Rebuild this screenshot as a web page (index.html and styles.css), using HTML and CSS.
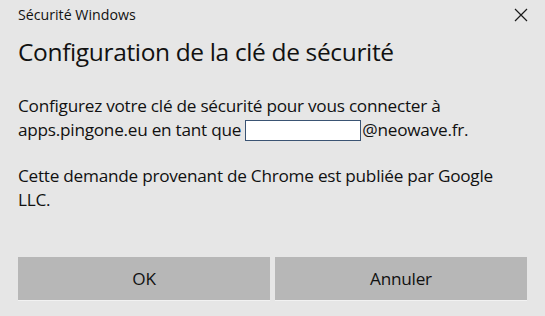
FILE: index.html
```html
<!DOCTYPE html>
<html lang="fr">
<head>
<meta charset="utf-8">
<title>Sécurité Windows</title>
<link rel="stylesheet" href="styles.css">
</head>
<body>
<div class="dialog">
  <div class="titlebar">
    <span class="app-name">Sécurité Windows</span>
    <button class="close" aria-label="Fermer">
      <svg width="14" height="14" viewBox="0 0 14 14"><path d="M1 1L13 13M13 1L1 13" stroke="#1a1a1a" stroke-width="1.2" fill="none"/></svg>
    </button>
  </div>
  <h1 class="heading">Configuration de la clé de sécurité</h1>
  <div class="content">
    <p class="para">Configurez votre clé de sécurité pour vous connecter à apps.pingone.eu en tant que <span class="redact"></span>@neowave.fr.</p>
    <p class="para">Cette demande provenant de Chrome est publiée par Google LLC.</p>
  </div>
  <div class="actions">
    <button class="btn">OK</button>
    <button class="btn">Annuler</button>
  </div>
</div>
</body>
</html>
```
FILE: styles.css
```css
html, body {
  margin: 0;
  padding: 0;
  background: #e6e6e6;
}
body {
  font-family: "Open Sans", "Noto Sans", sans-serif;
  color: #111;
}
.dialog {
  width: 545px;
  height: 316px;
  box-sizing: border-box;
  padding: 0 18px 0 18px;
  display: flex;
  flex-direction: column;
}
.titlebar {
  display: flex;
  align-items: center;
  justify-content: space-between;
  height: 30px;
}
.app-name {
  font-size: 14.2px;
  line-height: 16px;
  margin-top: -1px;
}
.close {
  border: none;
  background: transparent;
  padding: 0;
  width: 14px;
  height: 14px;
  margin-right: -1px;
  display: flex;
}
.heading {
  margin: 4px 0 0 0;
  font-weight: normal;
  font-size: 24.5px;
  letter-spacing: -0.35px;
  line-height: 36px;
}
.content {
  margin-top: 24px;
}
.para {
  margin: 0 0 22px 0;
  font-size: 17.2px;
  letter-spacing: -0.25px;
  line-height: 24px;
}
.redact {
  display: inline-block;
  width: 114px;
  height: 19px;
  background: #fff;
  border: 1px solid #3a5373;
  vertical-align: -5px;
  margin: 0 1px 0 0;
}
.actions {
  margin-top: auto;
  margin-bottom: 16px;
  display: flex;
  gap: 5px;
}
.btn {
  flex: 1;
  height: 43px;
  border: none;
  background: #b7b7b7;
  font-family: "Open Sans", "Noto Sans", sans-serif;
  font-size: 17.2px;
  letter-spacing: -0.25px;
  color: #111;
  padding: 0;
  box-shadow: 0 1px 0 #f2f2f2;
}
```
